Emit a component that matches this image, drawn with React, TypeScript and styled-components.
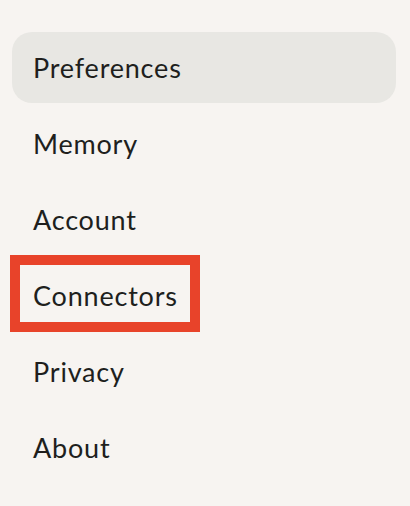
import React from "react";
import styled, { createGlobalStyle } from "styled-components";

const GlobalStyle = createGlobalStyle`
  html, body {
    margin: 0;
    padding: 0;
    background: #f7f4f1;
  }
`;

const items = ["Preferences", "Memory", "Account", "Connectors", "Privacy", "About"];

const SettingsNav = (): JSX.Element => {
  return (
    <>
      <GlobalStyle />
      <Sidebar>
        {items.map((label, i) => (
          <NavItem key={label} active={i === 0} marked={label === "Connectors"}>
            {label}
          </NavItem>
        ))}
      </Sidebar>
    </>
  );
};

export default SettingsNav;

const Sidebar = styled.nav`
  width: 410px;
  height: 506px;
  box-sizing: border-box;
  padding: 32px 14px 0 12px;
  display: flex;
  flex-direction: column;
  gap: 5px;
`;

const NavItem = styled.div<{ active?: boolean; marked?: boolean }>`
  position: relative;
  height: 71px;
  display: flex;
  align-items: center;
  padding-left: 21px;
  border-radius: 20px;
  font-family: Lato, "Noto Sans", sans-serif;
  font-size: 27px;
  letter-spacing: 0.8px;
  color: #201f1d;
  background: ${({ active }) => (active ? "#e8e7e3" : "transparent")};

  /* red outline drawn over the flagged entry */
  &::after {
    content: "";
    display: ${({ marked }) => (marked ? "block" : "none")};
    position: absolute;
    left: -2px;
    top: -5px;
    width: 190px;
    height: 77px;
    box-sizing: border-box;
    border: 10px solid #e8432a;
  }
`;
